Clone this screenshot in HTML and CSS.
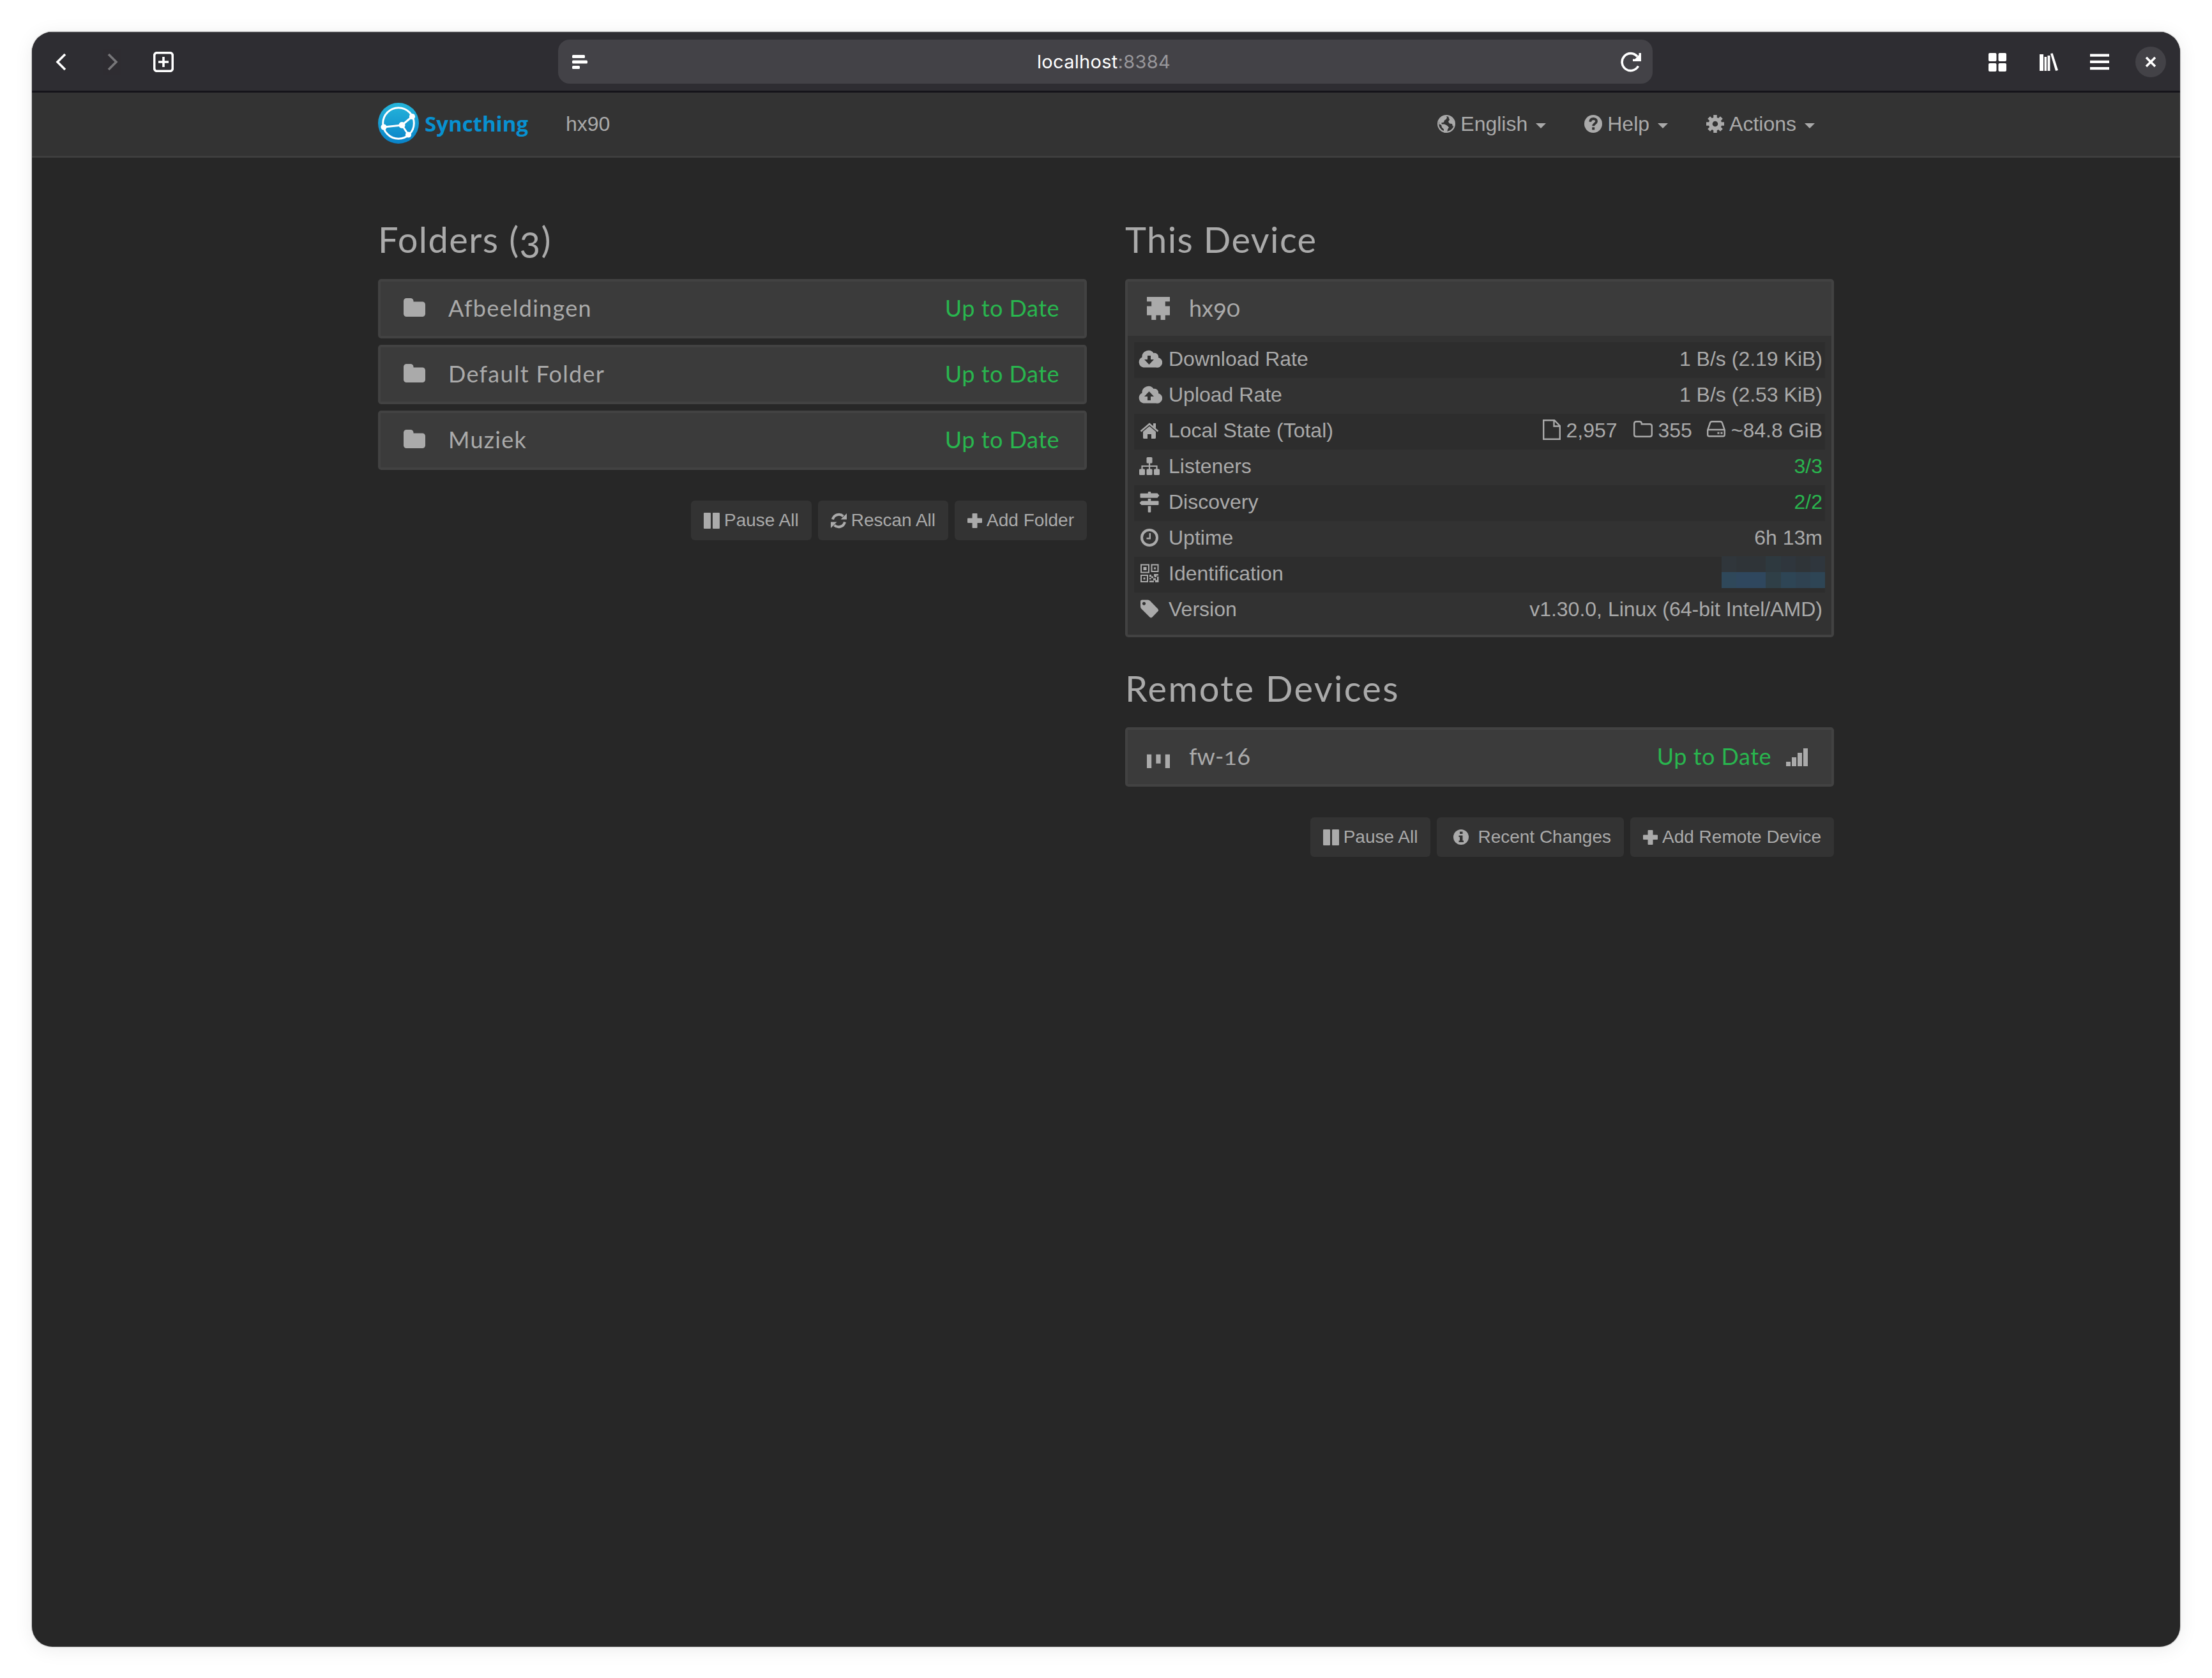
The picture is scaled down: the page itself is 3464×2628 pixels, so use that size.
FILE: index.html
```html
<!DOCTYPE html>
<html lang="en">
<head>
  <meta charset="UTF-8" />
  <meta name="viewport" content="width=device-width, initial-scale=1.0"/>
  <title>hx90 | Syncthing</title>
  <link rel="stylesheet" href="styles.css">
</head>
<body>
  <!-- shared icons -->
  <svg class="sprite" xmlns="http://www.w3.org/2000/svg">
    <symbol id="folder" viewBox="0 0 34 29">
      <path d="M0 4.500a4.500 4.500 0 0 1 4.500-4.500h6.500a4.500 4.500 0 0 1 4.500 4.500v1h14a4.500 4.500 0 0 1 4.500 4.500v14.500a4.500 4.500 0 0 1-4.500 4.500h-25a4.500 4.500 0 0 1-4.500-4.500z"/>
    </symbol>
    <symbol id="pause" viewBox="0 0 25 25">
      <rect x="0" y="0" width="11" height="25" rx="1"/>
      <rect x="14" y="0" width="11" height="25" rx="1"/>
    </symbol>
    <symbol id="plus" viewBox="0 0 23 23">
      <path d="M8.500 0h6q1 0 1 1v6.500h6.500q1 0 1 1v5.500q0 1-1 1h-6.500v7q0 1-1 1h-6q-1 0-1-1v-7h-6.500q-1 0-1-1v-5.500q0-1 1-1h6.500v-6.500q0-1 1-1z"/>
    </symbol>
    <symbol id="caret" viewBox="0 0 16 8"><path d="M0 0h16l-8 8z"/></symbol>
  </svg>

  <div class="window">
    <header class="toolbar">
      <div class="tools tools-left">
        <svg class="tool" viewBox="0 0 32 32"><path class="line" d="M22 4L10 16l12 12"/></svg>
        <svg class="tool dim" viewBox="0 0 32 32"><path class="line" d="M10 4l12 12-12 12"/></svg>
        <svg class="tool" viewBox="0 0 32 32"><rect class="line" x="1.700" y="1.700" width="28.600" height="28.600" rx="4"/><path class="line" d="M16 8v16M8 16h16"/></svg>
      </div>
      <div class="urlbar">
        <svg class="reader" viewBox="0 0 24 22"><rect width="20" height="5" rx="1.500"/><rect y="8.500" width="24" height="5" rx="1.500"/><rect y="17" width="12" height="5" rx="1.500"/></svg>
        <span class="url">localhost<span class="port">:8384</span></span>
        <svg class="reload" viewBox="0 0 34 32"><path class="line" d="M28.500 22.500A13.500 13.500 0 1 1 27 7.500"/><path d="M33 2v13H20v-3.500h3.500L29.500 5V2z"/></svg>
      </div>
      <div class="tools tools-right">
        <svg class="tool" viewBox="0 0 32 32"><rect x="2" y="2" width="12.500" height="13" rx="2"/><rect x="17.500" y="2" width="12.500" height="13" rx="2"/><rect x="2" y="18" width="12.500" height="13" rx="2"/><rect x="17.500" y="18" width="12.500" height="13" rx="2"/></svg>
        <svg class="tool" viewBox="0 0 32 32"><path d="M2 4h6v26H2zM9.500 8h3.500v22H9.500zM14.500 6h4v24h-4zM19 3l3.500-.8L31 29l-4 1z"/></svg>
        <svg class="tool" viewBox="0 0 32 32"><rect x="1" y="3.500" width="30" height="4.200"/><rect x="1" y="13.700" width="30" height="4.200"/><rect x="1" y="24" width="30" height="4.200"/></svg>
        <span class="close"><svg viewBox="0 0 18 18"><path class="line" d="M2 2l14 14M16 2L2 16"/></svg></span>
      </div>
    </header>

    <nav class="navbar">
      <div class="container nav-inner">
        <a class="brand">
          <svg class="logo" viewBox="0 0 64 64">
            <defs>
              <linearGradient id="logoFill" x1="0" y1="0" x2="0" y2="1">
                <stop offset="0" stop-color="#26b6db"/>
                <stop offset="1" stop-color="#0882c8"/>
              </linearGradient>
            </defs>
            <circle cx="32" cy="32" r="32" fill="url(#logoFill)"/>
            <g fill="none" stroke="#fff" stroke-width="3">
              <circle cx="32" cy="32" r="24.300"/>
              <path d="M9 38l28.500-3L53.500 21.500M37.500 35l10 15"/>
            </g>
            <g fill="#fff">
              <circle cx="9" cy="38" r="4.600"/><circle cx="37.500" cy="35" r="5"/>
              <circle cx="53.500" cy="21.500" r="4.600"/><circle cx="47.500" cy="50" r="4.600"/>
            </g>
          </svg>
          <span class="brand-name">Syncthing</span>
        </a>
        <span class="host">hx90</span>
        <ul class="menu">
          <li>
            <svg class="nav-icon" viewBox="0 0 28 28"><circle cx="14" cy="14" r="12.900" fill="none" stroke="#aaa" stroke-width="2.200"/><path d="M8 3l5-1.500 2 2-1 3-3 2-1 3-4 1 1 2 4 0 4 2 3 3-2 3-1 5h-5l0-5-3-3-1-4-3.500-1L3 8zM17 2.500l5 2 4 6v6l-2 1.500-1-4-4-.5-2-3 2-3z"/></svg>
            <span>English</span><svg class="caret"><use href="#caret"/></svg>
          </li>
          <li>
            <svg class="nav-icon" viewBox="0 0 28 28"><circle cx="14" cy="14" r="14"/><path d="M9.200 10.800C9.700 7.500 11.700 6 14.200 6c2.900 0 4.900 1.600 4.900 4 0 3.500-4.900 3.400-4.900 7.300" fill="none" stroke="#333" stroke-width="3.800"/><rect x="12.200" y="19.300" width="4" height="4" fill="#333"/></svg>
            <span>Help</span><svg class="caret"><use href="#caret"/></svg>
          </li>
          <li>
            <svg class="nav-icon" viewBox="0 0 28 28"><circle cx="14" cy="14" r="7.300" fill="none" stroke="#aaa" stroke-width="6"/><g stroke="#aaa" stroke-width="5.500"><path d="M14 0v6M14 22v6M0 14h6M22 14h6M4.100 4.100l4.200 4.200M19.700 19.700l4.200 4.200M23.900 4.100l-4.200 4.200M4.100 23.900l4.200-4.200"/></g></svg>
            <span>Actions</span><svg class="caret"><use href="#caret"/></svg>
          </li>
        </ul>
      </div>
    </nav>

    <main class="container columns">
      <section class="column">
        <h3>Folders (<span class="old">3</span>)</h3>
        <div class="panel">
          <div class="panel-heading">
            <svg class="folder-icon"><use href="#folder"/></svg>
            <span class="title">Afbeeldingen</span>
            <span class="status">Up to Date</span>
          </div>
        </div>
        <div class="panel">
          <div class="panel-heading">
            <svg class="folder-icon"><use href="#folder"/></svg>
            <span class="title">Default Folder</span>
            <span class="status">Up to Date</span>
          </div>
        </div>
        <div class="panel">
          <div class="panel-heading">
            <svg class="folder-icon"><use href="#folder"/></svg>
            <span class="title">Muziek</span>
            <span class="status">Up to Date</span>
          </div>
        </div>
        <div class="buttons">
          <button type="button"><svg class="btn-icon"><use href="#pause"/></svg>Pause All</button>
          <button type="button"><svg class="btn-icon" viewBox="0 0 25 25"><path d="M3 10.500A10 10 0 0 1 19.500 5.500M22 14.500A10 10 0 0 1 5.500 19.500" fill="none" stroke="#aaa" stroke-width="4"/><path d="M25 1v9.500h-9.500zM0 24v-9.500h9.500z"/></svg>Rescan All</button>
          <button type="button"><svg class="btn-icon plus"><use href="#plus"/></svg>Add Folder</button>
        </div>
      </section>

      <section class="column">
        <h3>This Device</h3>
        <div class="panel">
          <div class="panel-heading">
            <svg class="identicon" viewBox="0 0 5 5"><path d="M0 0h5v1H4v1h1v2H4v1H3V4H2v1H1V4H0V2h1V1H0z"/></svg>
            <span class="title device">hx<span class="old">9</span><span class="old-x">0</span></span>
          </div>
          <div class="panel-body">
            <table class="details">
              <tbody>
                <tr>
                  <th><svg class="row-icon" viewBox="0 0 40 36"><path fill-rule="evenodd" d="M34 16A6 6 0 0 0 26.500 9A10 10 0 0 0 8.500 15.500A8.500 8.500 0 0 0 10.500 31.500h20A7.800 7.800 0 0 0 34 16zM17 13h5v6h5l-7.500 8-7.500-8h5z"/></svg>Download Rate</th>
                  <td>1 B/s (2.19 KiB)</td>
                </tr>
                <tr>
                  <th><svg class="row-icon" viewBox="0 0 40 36"><path fill-rule="evenodd" d="M34 16A6 6 0 0 0 26.500 9A10 10 0 0 0 8.500 15.500A8.500 8.500 0 0 0 10.500 31.500h20A7.800 7.800 0 0 0 34 16zM17 27h5v-6h5l-7.500-8-7.500 8h5z"/></svg>Upload Rate</th>
                  <td>1 B/s (2.53 KiB)</td>
                </tr>
                <tr>
                  <th><svg class="row-icon" viewBox="0 0 40 36"><path d="M20 11.500l10 8.500v9.500q0 1.500-1.500 1.500H23v-7h-6v7h-5.500q-1.500 0-1.500-1.500V20z"/><path d="M6.500 19.500L20 8l13.500 11.500" fill="none" stroke="#aaa" stroke-width="2.600"/><path d="M26 7h4v8l-4-3.500z"/></svg>Local State (Total)</th>
                  <td>
                    <svg class="stat file" viewBox="0 0 28 32"><path class="outline" d="M1.200 1.200h17L26.800 10v20.800H1.200zM17.500 1.200v9.300h9.300"/></svg>2,957
                    <svg class="stat dir" viewBox="0 0 30 26"><path class="outline" d="M1.200 4.500q0-3.300 3.300-3.300h5q3.300 0 3.300 3.300v.7h12.700q3.300 0 3.300 3.300v13q0 3.300-3.300 3.300h-21q-3.300 0-3.300-3.300z"/></svg>355
                    <svg class="stat disk" viewBox="0 0 29 26"><path class="outline" d="M1.200 14.500L5 3.500q.8-2.300 3-2.300h13q2.200 0 3 2.300l3.800 11v7.300q0 2.400-2.400 2.400H3.600q-2.400 0-2.400-2.400zM1.200 14h26.600"/><rect x="16.500" y="17.700" width="3" height="3"/><rect x="21.500" y="17.700" width="3" height="3"/></svg>~84.8 GiB
                  </td>
                </tr>
                <tr>
                  <th><svg class="row-icon" viewBox="0 0 40 36"><rect x="15.500" y="4" width="9" height="9.500" rx="1.500"/><rect x="4" y="22.500" width="9" height="9.500" rx="1.500"/><rect x="15.500" y="22.500" width="9" height="9.500" rx="1.500"/><rect x="27" y="22.500" width="9" height="9.500" rx="1.500"/><path d="M8.500 23v-5h23v5M20 13v10" fill="none" stroke="#aaa" stroke-width="2.200"/></svg>Listeners</th>
                  <td class="ok">3/3</td>
                </tr>
                <tr>
                  <th><svg class="row-icon" viewBox="0 0 40 36"><path d="M17.700 3.500q0-1.500 1-1.500h2.600q1 0 1 1.500V4.500h10.200l3 3.500-3 3.700H6.500q-1 0-1-1v-5q0-1 1-1h11.200zM17.700 13h4.600v3.500h11.200q1 0 1 1V22q0 1-1 1H7.500l-3-3.200 3-3.300h10.200zM17.700 24.500h4.600v9q0 1-1 1h-2.600q-1 0-1-1z"/></svg>Discovery</th>
                  <td class="ok">2/2</td>
                </tr>
                <tr>
                  <th><svg class="row-icon" viewBox="0 0 40 36"><circle cx="20" cy="18" r="12" fill="none" stroke="#aaa" stroke-width="4"/><path d="M20.800 11v8.300H15.500" fill="none" stroke="#aaa" stroke-width="2.400"/></svg>Uptime</th>
                  <td>6h 13m</td>
                </tr>
                <tr>
                  <th><svg class="row-icon" viewBox="0 0 40 36"><g fill="none" stroke="#aaa" stroke-width="2"><rect x="7" y="4.500" width="12" height="12"/><rect x="23.500" y="4.500" width="10" height="10.500"/><rect x="7" y="21" width="10" height="10"/></g><path d="M10.500 8h5v5h-5zM27 8.500h3v3h-3zM10.500 24.500h3v3h-3zM20 20h3v2.500h4V19h7v2.500h-3V24h-3v-1.500h-2v3h-3v-2h-3zM20 29.500h7V32h-7zM26 25.500h4v3h2V23h2.500v9H29v-3h-3zM20 25h2.500v2.500H20z"/></svg>Identification</th>
                  <td>
                    <div class="masked">
                      <i class="m1"></i><i class="m2"></i><i class="m2"></i><i class="m3"></i><i class="m4"></i><i class="m2"></i><i class="m4"></i>
                      <i class="m5"></i><i class="m6"></i><i class="m6"></i><i class="m7"></i><i class="m8"></i><i class="m9"></i><i class="m8"></i>
                    </div>
                  </td>
                </tr>
                <tr>
                  <th><svg class="row-icon" viewBox="0 0 40 36"><path fill-rule="evenodd" d="M6 6q0-2.500 2.500-2.500h9q2 0 3.500 1.500L33.200 17.500q1.800 2 0 4L24.500 30.500q-2 1.800-4 0L7.500 17.500Q6 16 6 14zM11.500 6.700a2.600 2.600 0 1 0 .01 0z"/></svg>Version</th>
                  <td>v1.30.0, Linux (64-bit Intel/AMD)</td>
                </tr>
              </tbody>
            </table>
          </div>
        </div>

        <h3 class="remote">Remote Devices</h3>
        <div class="panel">
          <div class="panel-heading">
            <svg class="identicon" viewBox="0 0 5 5"><path d="M0 2h1v3H0zM2 2h1v2H2zM4 2h1v3H4z"/></svg>
            <span class="title device">fw-<span class="old-x">1</span>6</span>
            <span class="status">Up to Date</span>
            <svg class="signal" viewBox="0 0 34 28"><rect y="21" width="7" height="7"/><rect x="9" y="14" width="7" height="14"/><rect x="18" y="7" width="7" height="21"/><rect x="27" width="7" height="28"/></svg>
          </div>
        </div>
        <div class="buttons">
          <button type="button"><svg class="btn-icon"><use href="#pause"/></svg>Pause All</button>
          <button type="button"><svg class="btn-icon info" viewBox="0 0 24 24"><circle cx="12" cy="12" r="12"/><path d="M10 3.500h4.500v3.500H10zM8.500 9.500h6v8H16V20H8.500v-2.500H10v-5.500H8.500z" fill="#333"/></svg>Recent Changes</button>
          <button type="button"><svg class="btn-icon plus"><use href="#plus"/></svg>Add Remote Device</button>
        </div>
      </section>
    </main>
  </div>
</body>
</html>
```
FILE: styles.css
```css
* {
  box-sizing: border-box;
}

body {
  margin: 0;
  padding: 50px;
  height: 2628px;
  background-color: #fff;
  color: #aaa;
  font-family: "Liberation Sans", Arial, sans-serif;
  font-size: 32px;
}

svg {
  display: block;
  flex: none;
  fill: #aaa;
}

.sprite {
  display: none;
}

.window {
  height: 2529px;
  border-radius: 32px;
  overflow: hidden;
  background-color: #272727;
  box-shadow: 0 0 2px rgba(0, 0, 0, 0.6), 0 4px 30px rgba(0, 0, 0, 0.08);
}

/* browser toolbar */
.toolbar {
  display: grid;
  grid-template-columns: 1fr 1714px 1fr;
  align-items: center;
  height: 95px;
  padding: 0 22px 0 20px;
  background-color: #2e2d32;
  border-top: 1px solid #46464a;
  border-bottom: 3px solid #15141a;
}

.toolbar svg {
  fill: #fff;
}

.line {
  fill: none;
  stroke: #fff;
  stroke-width: 3.6;
}

.toolbar .line {
  fill: none;
}

.tools {
  display: flex;
  align-items: center;
  gap: 48px;
}

.tools-left {
  padding-left: 10px;
}

.tools-right {
  justify-content: flex-end;
}

.tool {
  width: 32px;
  height: 32px;
}

.dim {
  opacity: 0.35;
}

.close {
  display: flex;
  align-items: center;
  justify-content: center;
  width: 48px;
  height: 48px;
  margin-left: -8px;
  border-radius: 50%;
  background-color: #434247;
}

.close svg {
  width: 18px;
  height: 18px;
}

.urlbar {
  display: flex;
  align-items: center;
  justify-content: space-between;
  height: 69px;
  padding: 0 17px 0 22px;
  border-radius: 18px;
  background-color: #434247;
}

.reader {
  width: 24px;
  height: 22px;
}

.reload {
  width: 34px;
  height: 32px;
}

.url {
  font-family: Inter, sans-serif;
  font-size: 29px;
  letter-spacing: 0.3px;
  color: #fff;
}

.port {
  color: #98979b;
}

/* page navigation */
.navbar {
  height: 102px;
  background-color: #333;
  border-bottom: 3px solid #3e3e3e;
}

.container {
  width: 2280px;
  margin: 0 auto;
}

.nav-inner {
  display: flex;
  align-items: center;
  height: 97px;
}

.brand {
  display: flex;
  align-items: center;
  gap: 9px;
  width: 294px;
}

.logo {
  width: 64px;
  height: 64px;
  margin-bottom: 2px;
}

.brand-name {
  font-family: "Open Sans", sans-serif;
  font-size: 33px;
  font-weight: 700;
  color: #0891d1;
}

.host,
.menu span {
  padding-top: 2px;
}

.menu {
  display: flex;
  gap: 60px;
  margin: 0 30px 0 auto;
  padding: 0;
  list-style: none;
}

.menu li {
  display: flex;
  align-items: center;
}

.nav-icon {
  width: 28px;
  height: 28px;
  margin-right: 8px;
}

.caret {
  width: 16px;
  height: 8px;
  margin: 6px 0 0 13px;
}

/* columns */
.columns {
  display: grid;
  grid-template-columns: 1110px 1110px;
  justify-content: space-between;
  padding-top: 98px;
}

h3 {
  height: 60px;
  margin: 0 0 32px;
  font-family: Lato, sans-serif;
  font-size: 56px;
  font-weight: 400;
  letter-spacing: 1.4px;
  line-height: 60px;
}

.remote {
  margin: 50px 0 31px;
  letter-spacing: 2.3px;
}

/* text figures */
.old {
  display: inline-block;
  transform: translateY(0.14em);
}

.old-x {
  display: inline-block;
  transform: scaleY(0.82);
  transform-origin: 50% 82%;
}

.panel {
  border: 4px solid #424242;
  border-radius: 5px;
  background-color: #323232;
}

.panel + .panel {
  margin-top: 10px;
}

.panel-heading {
  display: flex;
  align-items: center;
  height: 85px;
  padding: 0 37px 4px 30px;
  background-color: #3b3b3b;
  font-family: Lato, sans-serif;
  font-size: 36px;
}

.folder-icon {
  width: 34px;
  height: 29px;
  margin: 0 36px 0 6px;
}

.identicon {
  width: 36px;
  height: 36px;
  margin: 2px 30px 0 0;
}

.title {
  margin-right: auto;
  letter-spacing: 1.3px;
}

.device {
  letter-spacing: 0;
}

.status,
.ok {
  color: #29b64e;
}

.status {
  margin-right: 2px;
  letter-spacing: 0.5px;
}

.signal {
  width: 34px;
  height: 28px;
  margin: 4px 0 0 21px;
}

.panel-body {
  padding: 10px;
}

.details {
  width: 100%;
  border-collapse: collapse;
  table-layout: fixed;
}

.details tr {
  height: 56px;
}

.details tr:nth-child(odd) {
  background-color: #2d2d2d;
}

.details th,
.details td {
  padding: 0 4px 4px;
  font-weight: 400;
  line-height: 52px;
  text-align: left;
}

.details th {
  width: 36%;
}

.details td {
  text-align: right;
}

.row-icon {
  display: inline-block;
  width: 40px;
  height: 36px;
  margin-right: 10px;
  vertical-align: -7px;
}

.stat {
  display: inline-block;
  margin: 0 9px 0 14px;
}

.outline {
  fill: none;
  stroke: #aaa;
  stroke-width: 2.4;
}

.file {
  width: 28px;
  height: 32px;
  vertical-align: -4px;
}

.dir {
  width: 30px;
  height: 26px;
  margin-left: 16px;
  vertical-align: 0;
}

.disk {
  width: 29px;
  height: 26px;
  vertical-align: 0;
}

/* pixelated device ID */
.masked {
  display: grid;
  grid-template: 25px 25px / repeat(7, 1fr);
  width: 162px;
  margin: -4px -4px 0 auto;
}

.m1 { background-color: #30363b; }
.m2 { background-color: #2f3438; }
.m3 { background-color: #2e393f; }
.m4 { background-color: #2f363d; }
.m5 { background-color: #2f485a; }
.m6 { background-color: #2f475e; }
.m7 { background-color: #2f3f47; }
.m8 { background-color: #2e4555; }
.m9 { background-color: #2f4251; }

.buttons {
  display: flex;
  justify-content: flex-end;
  gap: 10px;
  margin-top: 48px;
}

button {
  display: flex;
  align-items: center;
  height: 62px;
  padding: 0 20px;
  border: none;
  border-radius: 6px;
  background-color: #333;
  color: #aaa;
  font-family: "Liberation Sans", Arial, sans-serif;
  font-size: 28px;
}

.btn-icon {
  width: 25px;
  height: 25px;
  margin-right: 7px;
}

.plus {
  width: 23px;
  height: 23px;
}

.info {
  width: 24px;
  height: 24px;
  margin: 0 14px 0 6px;
}
```
